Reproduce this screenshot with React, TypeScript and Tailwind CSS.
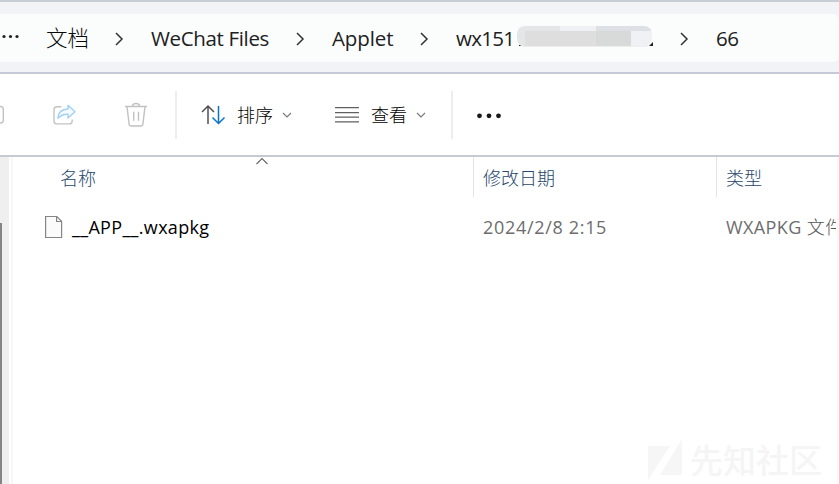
import React from "react";

function Chevron() {
  return (
    <svg className="mt-0.5 h-4 w-3 shrink-0" viewBox="0 0 12 16" fill="none" stroke="#333" strokeWidth="1.5">
      <path d="M3 2 9 8l-6 6" />
    </svg>
  );
}

function ChevronDown() {
  return (
    <svg className="h-2 w-3 shrink-0" viewBox="0 0 12 8" fill="none" stroke="#777" strokeWidth="1.1">
      <path d="M2 2l4 4 4-4" />
    </svg>
  );
}

function AddressBar() {
  return (
    <header className="h-[74px] shrink-0 border-t-2 border-b-2 border-t-[#c7ced6] border-b-[#c5cad6] bg-[#f2f3f7] py-3">
      <div className="flex h-12 items-center rounded-r-md bg-[#fbfdfd] text-[20.5px] tracking-[-0.35px] whitespace-nowrap text-[#202020]">
        <svg className="-mt-1 h-4 w-[46px] shrink-0" viewBox="0 0 46 16" fill="#222">
          <circle cx="4" cy="8.5" r="1.6" />
          <circle cx="10.5" cy="8.5" r="1.6" />
          <circle cx="17" cy="8.5" r="1.6" />
        </svg>
        <span className="w-[67px] shrink-0 text-[21.5px] font-light tracking-normal text-[#080808]">文档</span>
        <Chevron />
        <span className="ml-[26px] w-[143px] shrink-0">WeChat Files</span>
        <span className="flex w-[38px] shrink-0"><Chevron /></span>
        <span className="w-[86px] shrink-0 tracking-[-0.1px]">Applet</span>
        <Chevron />
        <span className="ml-[26px] w-[60px] shrink-0 tracking-[-0.7px]">wx151</span>
        <svg className="-mt-1 h-6 w-[138px] shrink-0" viewBox="-1 0 138 24">
          <path d="M2 21h2v1H2zM132 22l4-4v4z" fill="#222" />
          <clipPath id="mask"><rect x="0" y="2" width="135" height="21" rx="8" /></clipPath>
          <g clipPath="url(#mask)">
            <path d="M0 2h43v5H8v16H0z" fill="#e5e6e8" />
            <path d="M43 2h36v5H43z" fill="#eff0f3" />
            <path d="M79 2h57v5H79z" fill="#dde1e6" />
            <path d="M8 7h71v16H8z" fill="#dedede" />
            <path d="M79 7h35v16H79z" fill="#d8dad9" />
            <path d="M114 7h22v16h-22z" fill="#f0f1f4" />
            <path d="M8 22h128v1H8z" fill="#eceeef" />
          </g>
        </svg>
        <span className="ml-[24px] flex w-[38px] shrink-0"><Chevron /></span>
        <span>66</span>
      </div>
    </header>
  );
}

function Toolbar() {
  return (
    <div className="flex h-[83px] shrink-0 items-center border-b-2 border-[#c5cad3] bg-white text-[18px] whitespace-nowrap text-black">
      <svg className="h-6 w-[52px] shrink-0" viewBox="0 0 52 24" fill="none" stroke="#c3c3c3" strokeWidth="1.4">
        <path d="M-2 3.5H.5Q3.3 3.5 3.3 6.5v10.5Q3.3 20 .5 20H-2" />
      </svg>
      <svg className="h-6 w-[72px] shrink-0" viewBox="0 0 72 24" fill="none" strokeWidth="1.4" strokeLinejoin="round">
        <path d="M9.5 3.7H5Q2 3.7 2 6.7v11q0 3.2 3 3.2h12q3.2 0 3.2-3.2v-1.2" stroke="#c3c3c3" />
        <path d="M16 2.3 23 8.8l-7 6.3v-3.8q-6-.4-10 4Q6 6.5 16 6z" stroke="#a1d1f5" fill="#f4faff" />
      </svg>
      <svg className="h-[26px] w-[51px] shrink-0" viewBox="0 0 51 26" fill="none" stroke="#c1c1c1" strokeWidth="1.4">
        <path d="M1 4.5h22M8.5 4.5q0-3 3.5-3t3.5 3M3 4.5l2 17q.2 2.5 2.5 2.5h9q2.3 0 2.5-2.5l2-17" />
        <path d="M9.7 9.7v9M14.5 9.7v9" />
      </svg>
      <div className="h-12 w-0.5 shrink-0 bg-[#eeeeee]" />
      <svg className="ml-6 h-6 w-[36px] shrink-0" viewBox="0 0 36 24" fill="none" strokeWidth="1.5">
        <path d="M7 21V3M1 9l6-6 6 6" stroke="#505050" />
        <path d="M17.5 3v17.5M11.5 14.5l6 6 6-6" stroke="#0873c9" />
      </svg>
      <span className="w-[44px] shrink-0 pt-0.5 font-light">排序</span>
      <ChevronDown />
      <svg className="ml-[41px] h-5 w-[37px] shrink-0" viewBox="0 0 37 20" fill="#606060">
        <path d="M1 2h24v1.3H1zM1 7h24v1.3H1zM1 11.5h24v1.3H1zM1 16.3h24v1.3H1z" />
      </svg>
      <span className="w-[44px] shrink-0 pt-0.5 font-light">查看</span>
      <ChevronDown />
      <div className="ml-[24px] h-12 w-0.5 shrink-0 bg-[#eeeeee]" />
      <svg className="ml-6 h-4 w-8" viewBox="0 0 32 16" fill="#181818">
        <circle cx="2.5" cy="8.8" r="2.4" />
        <circle cx="12" cy="8.8" r="2.4" />
        <circle cx="21.5" cy="8.8" r="2.4" />
      </svg>
    </div>
  );
}

function FileList() {
  return (
    <main className="relative flex min-h-0 grow">
      <aside className="w-[9px] shrink-0 bg-[#efefef] pt-[66px]">
        <div className="h-full w-0.5 bg-[#858585]" />
      </aside>
      <div className="ml-0.5 w-0.5 shrink-0 bg-[#f7f7f7]" />
      <div className="min-w-0 grow overflow-hidden whitespace-nowrap">
        <div className="flex h-10 text-[18px] leading-[42px] font-light text-[#26466b]">
          <div className="flex w-[461px] shrink-0 border-r border-[#e3e3e3] pl-[47px]">
            <span className="w-[196px]">名称</span>
            <svg className="h-2 w-3" viewBox="0 0 12 8" fill="none" stroke="#666" strokeWidth="1.1">
              <path d="M.5 7 6 1.5 11.5 7" />
            </svg>
          </div>
          <div className="w-[243px] shrink-0 border-r border-[#e3e3e3] pl-[9px]">修改日期</div>
          <div className="pl-[9px]">类型</div>
        </div>
        <div className="mt-[9px] flex h-[42px] items-center text-[18px] text-[#6d6d6d]">
          <svg className="ml-8 h-6 w-[27px] shrink-0" viewBox="0 0 27 24" fill="#fbfbfb" stroke="#858585" strokeWidth="1.2">
            <path d="M.6 1.5h11.2l4.8 4.8v16.2H.6zM11.6 1.5v5h5" />
          </svg>
          <span className="w-[411px] shrink-0 tracking-[0.32px] text-black">__APP__.wxapkg</span>
          <span className="w-[243px] shrink-0 tracking-[0.68px]">2024/2/8 2:15</span>
          <span className="w-[110px] shrink-0 overflow-hidden tracking-[0.4px]">WXAPKG <span className="font-light text-[#555]">文件</span></span>
        </div>
      </div>
      <div className="w-0.5 shrink-0 bg-[#f8f8f8]" />
      <div className="absolute right-[17px] bottom-0 flex h-12 items-center text-[33px] font-medium whitespace-nowrap text-[#f5f5f5]">
        <svg className="mr-[7px] h-[44px] w-[35px]" viewBox="0 0 35 44" fill="#f6f6f6">
          <path d="M0 8h22L0 42zM34 1v36H12z" />
        </svg>
        <span className="pt-0.5">先知社区</span>
      </div>
    </main>
  );
}

export default function App() {
  return (
    <div className="flex h-[484px] w-[839px] flex-col overflow-hidden bg-white font-['Open_Sans','Noto_Sans_CJK_SC',sans-serif]">
      <AddressBar />
      <Toolbar />
      <FileList />
    </div>
  );
}
